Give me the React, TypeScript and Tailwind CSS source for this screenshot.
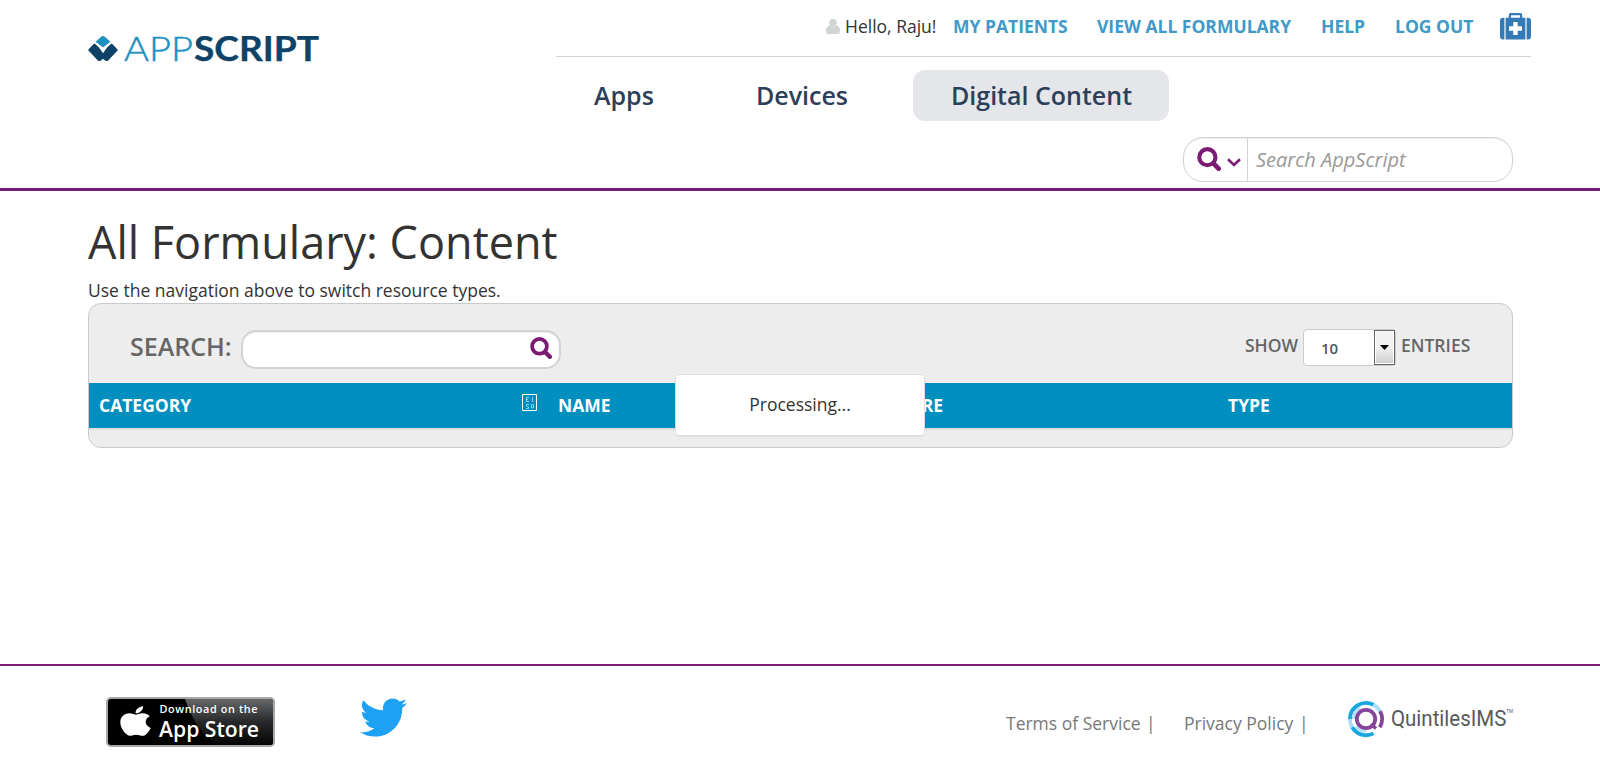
import type { ReactNode } from "react";
import { FaApple, FaTwitter } from "react-icons/fa";

function T({ children, className = "" }: { children: string; className?: string }) {
  return <span className={`block shrink-0 whitespace-nowrap ${className}`}>{children}</span>;
}

function SearchIcon({ className }: { className: string }) {
  return (
    <svg viewBox="0 0 22 22" className={className} fill="none" stroke="#7a1c74">
      <circle cx="9.5" cy="9.3" r="7.4" strokeWidth="3.8" />
      <path d="M15 15l4.8 4.8" strokeWidth="4.4" strokeLinecap="round" />
    </svg>
  );
}

function MedkitIcon() {
  return (
    <svg width="31" height="27" viewBox="0 0 31 27" className="-mt-px ml-auto" fill="#337ab7">
      <path d="M4.4 4.7V26.5H3.3Q0 26.5 0 23.2V8Q0 4.7 3.3 4.7Z" />
      <path d="M26.6 4.7V26.5H27.7Q31 26.5 31 23.2V8Q31 4.7 27.7 4.7Z" />
      <path fillRule="evenodd" d="M5.6 4.7H8.8V2Q8.8 0 10.6 0H20.4Q22.2 0 22.2 2V4.7H25.4V26.5H5.6ZM11 2.2V4.7H20V2.2ZM13.3 9V13.3H9V17.7H13.3V22H17.7V17.7H22V13.3H17.7V9Z" />
    </svg>
  );
}

function AppScriptLogo() {
  return (
    <svg width="240" height="36" viewBox="0 0 240 36" className="shrink-0">
      <path d="M12.6 1.2Q15 -1 17.4 1.2L22.4 5.8 15 11.4 7.6 5.8Z" fill="#1f91c0" />
      <path d="M5.4 8.2Q6.6 7.4 7.8 8.4L11 11.4 15 17.2 19 11.4 22.2 8.4Q23.4 7.4 24.6 8.2L30 14 20.2 24.4Q18.6 25.6 17 24.6L15 22.8 13 24.6Q11.4 25.6 9.8 24.4L0 14Z" fill="#0e4367" />
      <g fontFamily="Lato, sans-serif" fontSize="33.4">
        <text x="36" y="25" fontWeight="300" fill="#1f91c0" stroke="#1f91c0" strokeWidth=".5" textLength="69" lengthAdjust="spacingAndGlyphs">APP</text>
        <text x="106" y="25" fontWeight="700" fill="#0e4367" stroke="#0e4367" strokeWidth=".3" textLength="125" lengthAdjust="spacingAndGlyphs">SCRIPT</text>
      </g>
    </svg>
  );
}

function NavLink({ className, children }: { className: string; children: string }) {
  return <a className={`block shrink-0 whitespace-nowrap font-bold text-[#4099c6] ${className}`}>{children}</a>;
}

function Column({ className, children }: { className: string; children: ReactNode }) {
  return <div className={`flex shrink-0 pt-[10px] ${className}`}>{children}</div>;
}

function AppStoreBadge() {
  return (
    <div className="relative h-[50px] w-[169px] overflow-hidden rounded-[5px] border-2 border-[#a6a8aa] bg-black">
      <svg width="165" height="46" className="absolute inset-0">
        <defs>
          <linearGradient id="shine" x1="0" y1="0" x2="0" y2="1">
            <stop offset="0" stopColor="#66686a" />
            <stop offset=".5" stopColor="#27282a" />
            <stop offset="1" stopColor="#050505" />
          </linearGradient>
        </defs>
        <path d="M77 0Q88 32 108 46H165V0Z" fill="url(#shine)" />
        <g fill="#fff" fontFamily="Open Sans, sans-serif">
          <text x="51.5" y="14" fontSize="10.8" fontWeight="600" textLength="98" lengthAdjust="spacing">Download on the</text>
          <text x="51" y="38" fontSize="22" fontWeight="600" textLength="100" lengthAdjust="spacingAndGlyphs">App Store</text>
        </g>
      </svg>
      <FaApple className="absolute left-[12px] top-[5px] h-[34px] w-[31px] text-white" preserveAspectRatio="none" />
    </div>
  );
}

function QuintilesLogo() {
  return (
    <svg width="180" height="44" viewBox="0 0 180 44" className="shrink-0">
      <g fill="none" strokeWidth="3.8">
        <path d="M1.9 19A16.1 16.1 0 0 1 25.5 4.8" stroke="#1aa6df" />
        <path d="M25.5 4.8A16.1 16.1 0 0 1 32 11.2" stroke="#a9dcf6" />
        <path d="M32 11.2A16.1 16.1 0 0 1 31.8 27.2" stroke="#85459a" />
        <path d="M1.9 19A16.1 16.1 0 0 0 4.2 27.2" stroke="#a9dcf6" />
        <path d="M4.2 27.2A16.1 16.1 0 0 0 25.5 33.4" stroke="#1aa6df" />
        <path d="M5.4 19A12.6 12.6 0 0 1 12 8M8 26.5A12.6 12.6 0 0 0 18 31.3" stroke="#b4e1f8" strokeWidth="3" />
        <circle cx="18" cy="19" r="9.2" stroke="#85459a" />
        <path d="M23 24l5 4.5" stroke="#85459a" strokeWidth="3.5" />
      </g>
      <text x="43" y="26" fontFamily="Roboto, sans-serif" fontSize="22.5" fontWeight="400" fill="#58595b" textLength="122" lengthAdjust="spacingAndGlyphs">QuintilesIMS<tspan fontSize="5" dy="-13">TM</tspan></text>
    </svg>
  );
}

export default function App() {
  return (
    <div className="flex h-[763px] w-[1600px] flex-col overflow-hidden bg-white font-['Open_Sans',sans-serif] text-[17.5px] leading-[24px] text-[#333]">
      <header className="flex h-[191px] shrink-0 border-b-[3px] border-[#7a1c74] pl-[88px]">
        <div className="w-[468px] pt-[36px]">
          <AppScriptLogo />
        </div>
        <div className="flex w-[975px] flex-col">
          <div className="flex h-[57px] shrink-0 border-b border-[#cfd4d5] pt-[14px]">
            <svg viewBox="0 0 14 15" className="ml-[270px] mt-[5px] h-[15px] w-[14px]" fill="#cfd4d5">
              <circle cx="7" cy="3.8" r="3.8" />
              <path d="M3.6 6.2Q7 9 10.4 6.2 14 7 14 12.5 14 15 11.6 15H2.4Q0 15 0 12.5 0 7 3.6 6.2Z" />
            </svg>
            <T className="ml-[5px] w-[91px]">Hello, Raju!</T>
            <NavLink className="ml-[17px] w-[115px]">MY PATIENTS</NavLink>
            <NavLink className="ml-[29px] w-[194px]">VIEW ALL FORMULARY</NavLink>
            <NavLink className="ml-[30px] w-[44px]">HELP</NavLink>
            <NavLink className="ml-[30px] w-[78px]">LOG OUT</NavLink>
            <MedkitIcon />
          </div>
          <nav className="mt-[13px] flex h-[51px] text-[25px] font-semibold leading-[51px] text-[#2c405a]">
            <T className="ml-[38px] w-[60px]">Apps</T>
            <T className="ml-[102px] w-[92px]">Devices</T>
            <T className="ml-[65px] w-[256px] rounded-[12px] bg-[#e4e6ea] pl-[38px]">Digital Content</T>
          </nav>
          <div className="ml-[627px] mt-[16px] flex h-[45px] w-[330px] rounded-[20px] border border-[#cfd4d5] shadow-[inset_0_1px_1px_rgba(0,0,0,0.075)]">
            <div className="flex w-[64px] border-r border-[#cfd4d5] pl-[14px]">
              <SearchIcon className="-ml-px mt-[9px] h-[24px] w-[24px]" />
              <svg width="14" height="9" viewBox="0 0 14 9" className="ml-[6px] mt-[20px]" fill="none" stroke="#7a1c74" strokeWidth="2.6">
                <path d="M1 1.2l6 5.8 6-5.8" />
              </svg>
            </div>
            <T className="pl-[8px] text-[20px] italic leading-[43px] text-[#999]">Search AppScript</T>
          </div>
        </div>
      </header>

      <main className="flex h-[473px] shrink-0 flex-col pl-[88px]">
        <h1 className="mt-[21px] h-[60px] text-[45px] leading-[60px]">All Formulary: Content</h1>
        <p className="mt-[6px] h-[24px]">Use the navigation above to switch resource types.</p>
        <section className="relative mt-px h-[145px] w-[1425px] overflow-hidden rounded-[13px] border border-[#c9cacc] bg-[#ededed]">
          <div className="flex h-[79px] pl-[41px] text-[#666]">
            <T className="w-[102px] pt-[25px] text-[25px] font-semibold leading-[34px]">SEARCH:</T>
            <div className="ml-[9px] mt-[26px] flex h-[39px] w-[320px] justify-end rounded-[15px] border-2 border-[#cfd4d5] bg-white pr-[7px] shadow-[inset_0_1px_1px_rgba(0,0,0,0.075)]">
              <SearchIcon className="mt-[5px] h-[22px] w-[22px]" />
            </div>
            <T className="ml-[684px] w-[54px] pt-[29px] font-semibold">SHOW</T>
            <div className="ml-[4px] mt-[25px] flex h-[37px] w-[93px] rounded-[4px] border border-[#ccc] bg-white">
              <T className="w-[70px] pl-[17px] pt-[8px] text-[15px] font-semibold leading-[20px] text-[#555]">10</T>
              <div className="flex h-[35px] w-[21px] items-center justify-center border border-[#666] bg-linear-to-b from-[#f2f2f2] from-50% to-[#cfcfcf] to-95% outline-1 -outline-offset-2 outline-white">
                <svg width="9" height="5"><path d="M0 0H9L4.5 5Z" /></svg>
              </div>
            </div>
            <T className="ml-[5px] pt-[29px] font-semibold">ENTRIES</T>
          </div>
          <div className="flex h-[45px] bg-[#008fbf] pl-[10px] font-bold text-white">
            <Column className="w-[459px]">
              <T className="w-[93px]">CATEGORY</T>
              <svg width="15" height="17" className="ml-[330px] mt-px" fill="none" stroke="#fff">
                <path d="M.5.5h14v16H.5z" />
                <path d="M7 3.5H4.5v4H7M4.5 5.5H6M10.5 3v5M7 10.5H4.5v1.5L6.5 13v1.5H4M9.5 10.5v3.5M11.5 10.5v3.5M10 10.5h1M10 14h1" strokeWidth=".7" opacity=".8" />
              </svg>
            </Column>
            <Column className="w-[329px]"><T>NAME</T></Column>
            <Column className="w-[341px]"><T>SCORE</T></Column>
            <Column className="w-[250px]"><T>TYPE</T></Column>
          </div>
          <div className="h-[2px] bg-[#ddd]" />
          <div className="absolute left-[586px] top-[70px] h-[62px] w-[250px] rounded-[4px] border border-[#ddd] bg-white pt-[17px] text-center shadow-[0_1px_1px_rgba(0,0,0,0.05)]">
            Processing...
          </div>
        </section>
      </main>

      <footer className="flex h-[99px] shrink-0 border-t-2 border-[#7a1c74] pl-[106px] text-[#777]">
        <div className="pt-[31px]"><AppStoreBadge /></div>
        <FaTwitter className="ml-[85px] mr-px mt-[28px] h-[47px] w-[47px] text-[#1da1f2]" />
        <div className="ml-[598px] flex w-[302px] pt-[45px]">
          <T className="w-[140px]">Terms of Service</T>
          <T className="w-[38px]">|</T>
          <T className="w-[115px]">Privacy Policy</T>
          <T className="w-[9px]">|</T>
        </div>
        <div className="ml-[40px] pt-[34px]"><QuintilesLogo /></div>
      </footer>
    </div>
  );
}
